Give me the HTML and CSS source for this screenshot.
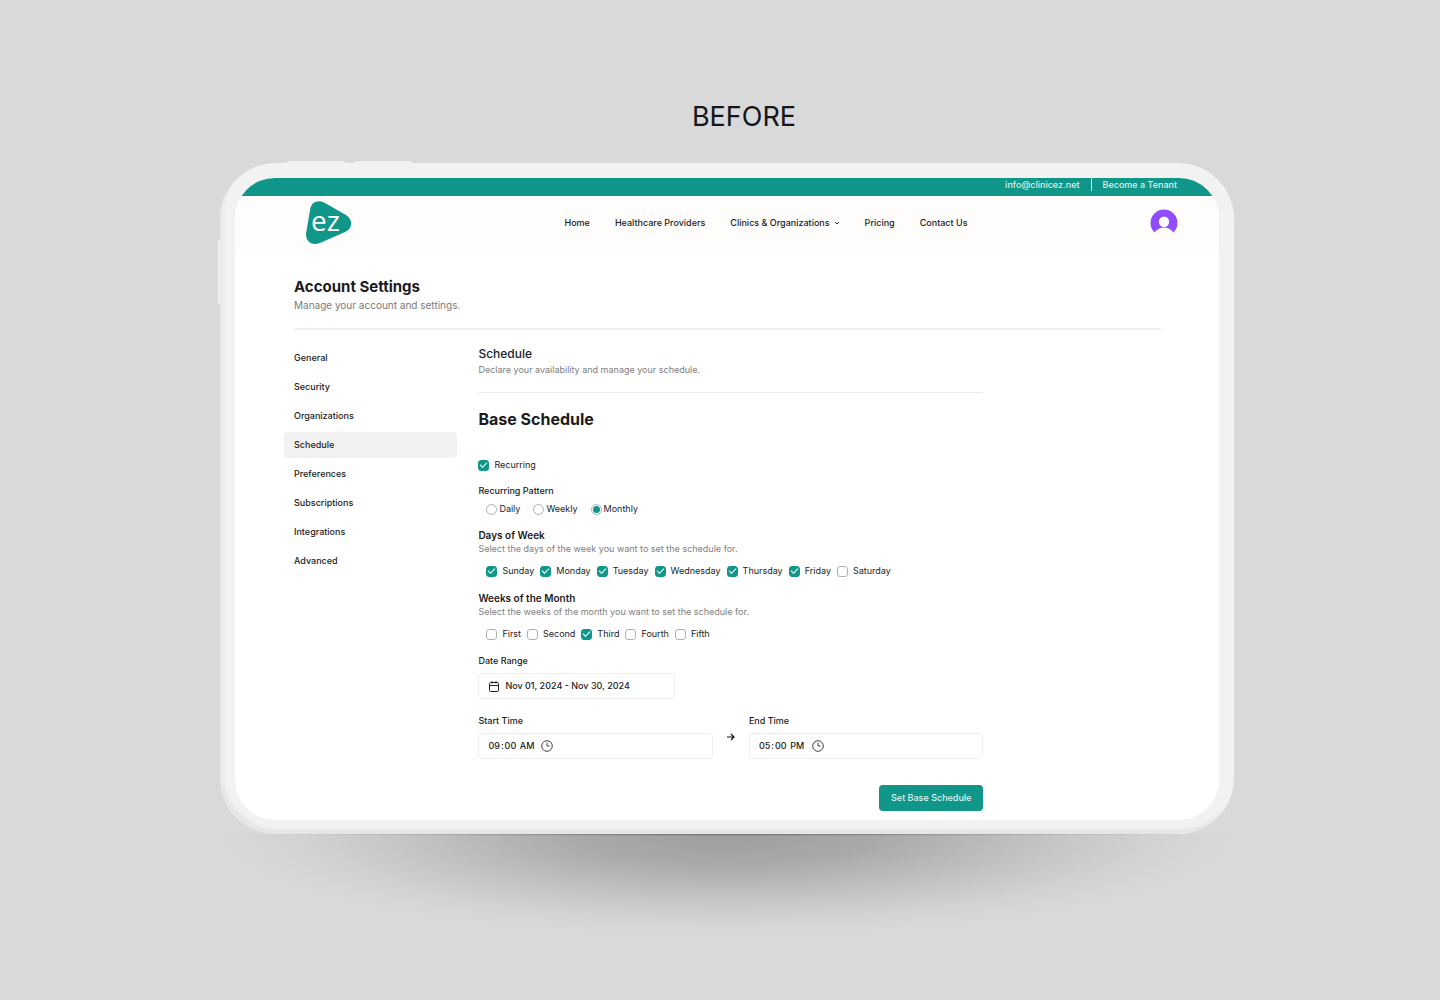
FILE: index.html
```
<!DOCTYPE html>
<html lang="en">
<head>
    <meta charset="UTF-8">
    <title>Account Settings</title>
    <link rel="stylesheet" href="styles.css">
</head>
<body>

    <div class="stage">
        <p class="caption">BEFORE</p>

        <!-- Tablet -->
        <div class="device">
            <span class="device-key key-one"></span>
            <span class="device-key key-two"></span>
            <span class="device-key key-side"></span>

            <div class="screen">
                <div class="topbar">
                    <a href="#">info@clinicez.net</a>
                    <span class="topbar-line"></span>
                    <a href="#">Become a Tenant</a>
                </div>

                <header class="header">
                    <a href="#" class="logo" aria-label="ez">
                        <svg width="46" height="44" viewBox="0 0 46 44">
                            <path d="M4 9C5 1 12-2 19 2L40 14C47 18 47 28 39 31L14 42C6 45 0 41 0 33Z" fill="#11968a"/>
                            <text x="5" y="30" class="logo-text">ez</text>
                        </svg>
                    </a>
                    <nav class="main-nav">
                        <a href="#">Home</a>
                        <a href="#">Healthcare Providers</a>
                        <a href="#">Clinics &amp; Organizations
                            <svg width="6" height="6" viewBox="0 0 6 6" fill="none" stroke="#333" stroke-width="1"><path d="M1 2l2 2 2-2"/></svg>
                        </a>
                        <a href="#">Pricing</a>
                        <a href="#">Contact Us</a>
                    </nav>
                    <a href="#" class="avatar" aria-label="Profile">
                        <svg width="28" height="28" viewBox="0 0 28 28">
                            <path d="M4.500 23.500A13.500 13.500 0 1 1 23.500 23.500Q19.500 18.500 14 18.500T4.500 23.500Z" fill="#8f4dfb"/>
                            <circle cx="14" cy="12.800" r="5.200" fill="#fff"/>
                        </svg>
                    </a>
                </header>

                <main class="content">
                    <div class="page-title">
                        <h1>Account Settings</h1>
                        <p>Manage your account and settings.</p>
                    </div>

                    <div class="columns">
                        <nav class="side-nav">
                            <a href="#">General</a>
                            <a href="#">Security</a>
                            <a href="#">Organizations</a>
                            <a href="#" class="active">Schedule</a>
                            <a href="#">Preferences</a>
                            <a href="#">Subscriptions</a>
                            <a href="#">Integrations</a>
                            <a href="#">Advanced</a>
                        </nav>

                        <section class="panel">
                            <div class="panel-title">
                                <h2>Schedule</h2>
                                <p>Declare your availability and manage your schedule.</p>
                            </div>

                            <h3>Base Schedule</h3>

                            <form class="schedule-form">
                                <label class="check field"><input type="checkbox" checked>Recurring</label>

                                <fieldset class="field">
                                    <legend class="label">Recurring Pattern</legend>
                                    <div class="radios">
                                        <label class="radio"><input type="radio" name="pattern">Daily</label>
                                        <label class="radio"><input type="radio" name="pattern">Weekly</label>
                                        <label class="radio"><input type="radio" name="pattern" checked>Monthly</label>
                                    </div>
                                </fieldset>

                                <fieldset class="field field-wide">
                                    <legend class="label label-big">Days of Week</legend>
                                    <p class="hint">Select the days of the week you want to set the schedule for.</p>
                                    <div class="checks">
                                        <label class="check"><input type="checkbox" checked>Sunday</label>
                                        <label class="check"><input type="checkbox" checked>Monday</label>
                                        <label class="check"><input type="checkbox" checked>Tuesday</label>
                                        <label class="check"><input type="checkbox" checked>Wednesday</label>
                                        <label class="check"><input type="checkbox" checked>Thursday</label>
                                        <label class="check"><input type="checkbox" checked>Friday</label>
                                        <label class="check"><input type="checkbox">Saturday</label>
                                    </div>
                                </fieldset>

                                <fieldset class="field field-wide">
                                    <legend class="label label-big">Weeks of the Month</legend>
                                    <p class="hint">Select the weeks of the month you want to set the schedule for.</p>
                                    <div class="checks">
                                        <label class="check"><input type="checkbox">First</label>
                                        <label class="check"><input type="checkbox">Second</label>
                                        <label class="check"><input type="checkbox" checked>Third</label>
                                        <label class="check"><input type="checkbox">Fourth</label>
                                        <label class="check"><input type="checkbox">Fifth</label>
                                    </div>
                                </fieldset>

                                <div class="date-range">
                                    <label class="label" for="range">Date Range</label>
                                    <button type="button" id="range" class="box date-button">
                                        <svg width="10" height="11" viewBox="0 0 10 11" fill="none" stroke="#222" stroke-width="1"><rect x=".5" y="1.500" width="9" height="9" rx="1.200"/><path d="M.5 4.500h9M3 0v2.500M7 0v2.500"/></svg>
                                        Nov 01, 2024 - Nov 30, 2024
                                    </button>
                                </div>

                                <div class="times">
                                    <div class="time">
                                        <label class="label" for="start">Start Time</label>
                                        <div class="box">
                                            <input type="time" id="start" value="09:00">
                                            <svg width="12" height="12" viewBox="0 0 12 12" fill="none" stroke="#444" stroke-width="1"><circle cx="6" cy="6" r="5.300"/><path d="M6 2.500V6h2.500"/></svg>
                                        </div>
                                    </div>
                                    <svg width="8" height="8" viewBox="0 0 8 8" fill="none" stroke="#111" stroke-width="1.200"><path d="M0 4h7M4 1l3 3-3 3"/></svg>
                                    <div class="time">
                                        <label class="label" for="end">End Time</label>
                                        <div class="box">
                                            <input type="time" id="end" value="17:00">
                                            <svg width="12" height="12" viewBox="0 0 12 12" fill="none" stroke="#444" stroke-width="1"><circle cx="6" cy="6" r="5.300"/><path d="M6 2.500V6h2.500"/></svg>
                                        </div>
                                    </div>
                                </div>

                                <button type="submit" class="submit">Set Base Schedule</button>
                            </form>
                        </section>
                    </div>
                </main>
            </div>
        </div>
        <div class="shadow"></div>
    </div>

</body>
</html>
```
FILE: styles.css
```
* {
    box-sizing: border-box;
}

body {
    margin: 0;
    background-color: #d9d9d9;
    font-family: Inter, "Liberation Sans", sans-serif;
    font-size: 9px;
    line-height: 14px;
    font-weight: 500;
    color: #1c1c1e;
}

h1, h2, h3, p {
    margin: 0;
}

a {
    color: inherit;
    text-decoration: none;
}

svg {
    display: block;
    flex: none;
    overflow: visible;
}

.stage {
    display: flex;
    flex-direction: column;
    align-items: center;
    padding: 101px 0 50px 14px;
}

.caption {
    margin-bottom: 30px;
    padding-left: 34px;
    font-size: 27px;
    line-height: 32px;
    font-weight: 400;
    color: #15161a;
}

/* Tablet frame */
.device {
    position: relative;
    width: 90%;
    max-width: 1014px;
    padding: 15px 15px 14px;
    border-radius: 56px;
    background-color: #f2f2f2;
    box-shadow: inset 3px -5px 3px #e4e6e8;
}

.device-key {
    position: absolute;
    top: -2px;
    width: 58px;
    height: 2px;
    border-radius: 2px 2px 0 0;
    background-color: #f0f0f0;
}

.key-one {
    left: 67px;
}

.key-two {
    left: 134px;
}

.key-side {
    top: 77px;
    left: -2px;
    width: 2px;
    height: 64px;
}

.screen {
    overflow: hidden;
    border-radius: 40px;
    background-color: #fff;
}

.shadow {
    width: 90%;
    max-width: 1014px;
    height: 110px;
    background:
        radial-gradient(closest-side, rgba(0, 0, 0, 0.3), transparent) 50% -2px / 96% 4px no-repeat,
        radial-gradient(ellipse 50% 92% at 50% 0, rgba(0, 0, 0, 0.28), rgba(0, 0, 0, 0.22) 30%, rgba(0, 0, 0, 0.1) 62%, rgba(0, 0, 0, 0.03) 84%, transparent);
}

/* Top of the page */
.topbar {
    display: flex;
    justify-content: flex-end;
    gap: 11px;
    height: 18px;
    padding-right: 42px;
    background-color: #11968a;
    color: #dff3f0;
}

.topbar-line {
    width: 1px;
    height: 13px;
    background-color: #dff3f0;
}

.header {
    display: grid;
    grid-template-columns: 1fr auto 1fr;
    align-items: center;
    height: 54px;
    padding: 0 41px 0 71px;
    background-color: #fffdfb;
}

.logo-text {
    font-family: "Open Sans", sans-serif;
    font-size: 28px;
    font-weight: 500;
    fill: #fff;
}

.main-nav {
    display: flex;
    gap: 25px;
    margin-left: 48px;
}

.main-nav a {
    display: flex;
    align-items: center;
    gap: 4px;
}

.avatar {
    justify-self: end;
}

/* Content */
.content {
    padding: 26px 58px 9px 59px;
}

.page-title {
    padding-bottom: 15px;
    border-bottom: 2px solid #f0f0f0;
}

.page-title h1 {
    font-size: 15px;
    line-height: 21px;
    font-weight: 700;
}

.page-title p {
    font-size: 10px;
    line-height: 16px;
    font-weight: 400;
    color: #7a7a7a;
}

.columns {
    display: flex;
    gap: 21px;
    padding-top: 15px;
}

.side-nav {
    display: flex;
    flex-direction: column;
    flex: 0 0 20%;
    gap: 3px;
    margin-left: -10px;
}

.side-nav a {
    padding: 6px 10px;
    border-radius: 4px;
}

.side-nav .active {
    background-color: #f2f2f2;
}

.panel {
    flex: 1;
    max-width: 505px;
}

.panel-title {
    padding-bottom: 15px;
    border-bottom: 1px solid #ececec;
}

.panel-title h2 {
    font-size: 12px;
    line-height: 18px;
    font-weight: 500;
}

.panel-title p,
.hint {
    font-weight: 400;
    color: #808080;
}

.panel h3 {
    margin: 14px 0 27px;
    font-size: 16px;
    line-height: 24px;
    font-weight: 700;
}

/* Form */
.schedule-form {
    display: flex;
    flex-direction: column;
}

fieldset {
    margin: 0;
    padding: 0;
    border: none;
}

.field {
    margin-bottom: 12px;
}

.field-wide {
    margin-bottom: 13px;
}

.label {
    display: block;
    padding: 0;
}

.label-big {
    font-size: 10px;
    font-weight: 600;
}

.checks,
.radios {
    display: flex;
    padding: 8px 8px 0;
    gap: 6px;
}

.radios {
    padding-top: 4px;
    gap: 13px;
}

.check,
.radio {
    display: flex;
    align-items: center;
    gap: 5px;
    font-weight: 400;
}

.radio {
    gap: 2px;
}

.check input,
.radio input {
    display: grid;
    place-items: center;
    appearance: none;
    width: 11px;
    height: 11px;
    margin: 0;
    border: 1px solid #a9b5b4;
    border-radius: 3px;
    background-color: #fff;
}

.radio input {
    border-radius: 50%;
}

.check input:checked {
    border-color: #11968a;
    background-color: #11968a;
}

.check input:checked::before {
    content: "";
    width: 6px;
    height: 3px;
    margin-bottom: 2px;
    border-left: 1px solid #fff;
    border-bottom: 1px solid #fff;
    transform: rotate(-45deg);
}

.radio input:checked::before {
    content: "";
    width: 7px;
    height: 7px;
    border-radius: 50%;
    background-color: #11968a;
}

.box {
    display: flex;
    align-items: center;
    height: 26px;
    margin-top: 5px;
    padding: 0 8px;
    gap: 6px;
    border: 1px solid #efefef;
    border-radius: 4px;
    background-color: #fff;
    color: inherit;
}

.date-range {
    margin-bottom: 15px;
}

.date-button {
    width: 39%;
    padding: 0 10px;
    font: inherit;
}

.times {
    display: flex;
    align-items: center;
    gap: 14px;
}

.time {
    flex: 1;
}

.time input {
    padding: 0;
    border: none;
    background: none;
    font: inherit;
    color: inherit;
}

.time input::-webkit-calendar-picker-indicator {
    display: none;
}

.submit {
    align-self: flex-end;
    height: 26px;
    margin-top: 26px;
    padding: 0 12px;
    border: none;
    border-radius: 4px;
    background-color: #11968a;
    color: #dff3f0;
    font: inherit;
    cursor: pointer;
}
```
